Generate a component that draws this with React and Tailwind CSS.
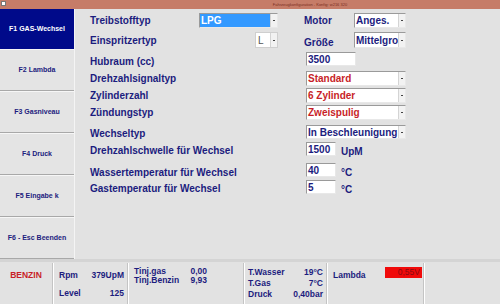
import React from 'react';

const font = { fontFamily: '"Liberation Sans", Arial, sans-serif' };

function Arrow() {
  return (
    <span className="flex h-full w-[7px] shrink-0 items-center justify-center border-l border-[#d4d4d4] bg-[#f2f2f2]">
      <span className="h-[1px] w-[2px] bg-[#444]" />
    </span>
  );
}

function Select({ value, w, red, hl }) {
  return (
    <div
      className={`flex h-full items-stretch border border-t-[#9a9a9a] border-l-[#9a9a9a] border-r-[#e8e8e8] border-b-[#e8e8e8] bg-white ${w}`}
    >
      <span
        className={`flex flex-1 items-center overflow-hidden whitespace-nowrap pl-[1px] text-[10px] font-bold ${
          hl ? 'bg-[#3399ff] text-white' : red ? 'text-[#c81e28]' : 'text-[#1c1c7e]'
        }`}
      >
        {value}
      </span>
      <Arrow />
    </div>
  );
}

function Field({ value, w }) {
  return (
    <div
      className={`flex h-full items-center border border-t-[#9a9a9a] border-l-[#9a9a9a] border-r-[#e8e8e8] border-b-[#e8e8e8] bg-white pl-[1px] text-[10px] font-bold text-[#1c1c7e] ${w}`}
    >
      {value}
    </div>
  );
}

function Label({ children, w }) {
  return <span className={`shrink-0 text-[10px] font-bold text-[#1c1c7e] ${w}`}>{children}</span>;
}

const menu = ['F1 GAS-Wechsel', 'F2 Lambda', 'F3 Gasniveau', 'F4 Druck', 'F5 Eingabe k', 'F6 - Esc Beenden'];

export default function App() {
  return (
    <div className="flex h-[304px] w-[500px] flex-col overflow-hidden bg-[#e2e2e2]" style={font}>
      {/* Title bar */}
      <div className="relative flex h-[9px] items-center justify-center bg-[#c67c68]">
        <span className="absolute left-[1px] top-[1px] h-[5px] w-[5px] border border-[#777] bg-white" />
        <span className="ml-[120px] text-[4px] text-[#7a2e22]">Fahrzeugkonfiguration - Konfig: w216 320</span>
      </div>

      <div className="flex h-[250px]">
        {/* Sidebar */}
        <div className="flex w-[75px] flex-col border-r border-[#f4f4f4]">
          {menu.map((m, i) => (
            <div
              key={m}
              className={`flex flex-1 items-center justify-center text-[7px] font-bold ${
                i === 0
                  ? 'bg-[#000a8a] text-white'
                  : 'border-b border-b-[#a8a8a8] border-t border-t-[#f6f6f6] bg-[#e4e4e4] text-[#1c1c7e]'
              }`}
            >
              {m}
            </div>
          ))}
        </div>

        {/* Main form */}
        <div className="flex flex-1 flex-col pl-[15px] pt-[4px]">
          <div className="flex h-[15px] items-center">
            <Label w="w-[109px]">Treibstofftyp</Label>
            <Select value="LPG" w="w-[79px]" hl />
            <span className="w-[26px]" />
            <Label w="w-[50px]">Motor</Label>
            <Select value="Anges." w="w-[52px]" />
          </div>
          <div className="mt-[4px] flex h-[16px] items-center">
            <Label w="w-[165px]">Einspritzertyp</Label>
            <div className="flex h-full w-[23px] items-stretch border border-[#cfcfcf] bg-white">
              <span className="flex flex-1 items-center pl-[2px] text-[10px] text-[#555]">L</span>
              <Arrow />
            </div>
            <span className="w-[26px]" />
            <Label w="w-[50px] pt-[4px]">Größe</Label>
            <Select value="Mittelgroß" w="w-[52px]" />
          </div>
          <div className="mt-[4px] flex h-[14px] items-center">
            <Label w="w-[216px] pt-[5px]">Hubraum (cc)</Label>
            <Field value="3500" w="w-[50px]" />
          </div>
          <div className="mt-[5px] flex h-[15px] items-center">
            <Label w="w-[216px]">Drehzahlsignaltyp</Label>
            <Select value="Standard" w="w-[100px]" red />
          </div>
          <div className="mt-[2px] flex h-[15px] items-center">
            <Label w="w-[216px]">Zylinderzahl</Label>
            <Select value="6 Zylinder" w="w-[100px]" red />
          </div>
          <div className="mt-[2px] flex h-[15px] items-center">
            <Label w="w-[216px]">Zündungstyp</Label>
            <Select value="Zweispulig" w="w-[100px]" red />
          </div>
          <div className="mt-[5px] flex h-[14px] items-center">
            <Label w="w-[216px] pt-[2px]">Wechseltyp</Label>
            <Select value="In Beschleunigung" w="w-[100px]" />
          </div>
          <div className="mt-[3px] flex h-[14px] items-center">
            <Label w="w-[216px] pt-[3px]">Drehzahlschwelle für Wechsel</Label>
            <Field value="1500" w="w-[30px]" />
            <span className="ml-[5px] pt-[5px] text-[10px] font-bold text-[#1c1c7e]">UpM</span>
          </div>
          <div className="mt-[7px] flex h-[14px] items-center">
            <Label w="w-[216px] pt-[5px]">Wassertemperatur für Wechsel</Label>
            <Field value="40" w="w-[30px]" />
            <span className="ml-[5px] pt-[5px] text-[10px] font-bold text-[#1c1c7e]">°C</span>
          </div>
          <div className="mt-[3px] flex h-[14px] items-center">
            <Label w="w-[216px] pt-[2px]">Gastemperatur für Wechsel</Label>
            <Field value="5" w="w-[30px]" />
            <span className="ml-[5px] pt-[5px] text-[10px] font-bold text-[#1c1c7e]">°C</span>
          </div>
        </div>
      </div>

      {/* Status bar */}
      <div className="flex flex-1 border-t-[3px] border-[#d4d4d4] pt-[1px] text-[8.5px] font-bold text-[#1c1c7e]">
        <div className="flex w-[53px] justify-center border-r border-[#c4c4c4] pt-[6px] text-[#c81e28]">BENZIN</div>
        <div className="flex w-[75px] flex-col justify-between border-l border-r border-l-white border-r-[#c4c4c4] pb-[4px] pl-[5px] pr-[3px] pt-[6px]">
          <div className="flex justify-between">
            <span>Rpm</span>
            <span>379UpM</span>
          </div>
          <div className="flex justify-between">
            <span>Level</span>
            <span>125</span>
          </div>
        </div>
        <div className="flex w-[116px] flex-col border-l border-r border-l-white border-r-[#c4c4c4] pl-[5px] pr-[36px] pt-[4px] leading-[9px]">
          <div className="flex justify-between">
            <span>Tinj.gas</span>
            <span>0,00</span>
          </div>
          <div className="flex justify-between">
            <span>Tinj.Benzin</span>
            <span>9,93</span>
          </div>
        </div>
        <div className="flex w-[83px] flex-col border-l border-r border-l-white border-r-[#c4c4c4] pl-[3px] pr-[3px] pt-[4px] leading-[11px]">
          <div className="flex justify-between">
            <span>T.Wasser</span>
            <span>19°C</span>
          </div>
          <div className="flex justify-between">
            <span>T.Gas</span>
            <span>7°C</span>
          </div>
          <div className="flex justify-between">
            <span>Druck</span>
            <span>0,40bar</span>
          </div>
        </div>
        <div className="flex w-[97px] items-start border-l border-r border-l-white border-r-[#c4c4c4] pl-[5px] pt-[6px]">
          <span className="w-[52px]">Lambda</span>
          <span className="flex h-[11px] w-[37px] -translate-y-[2px] items-center justify-end bg-[#f00a0a] pr-[2px] font-normal text-[#8a0a10]">
            0,55V
          </span>
        </div>
        <div className="flex-1 border-l border-white" />
      </div>
    </div>
  );
}
